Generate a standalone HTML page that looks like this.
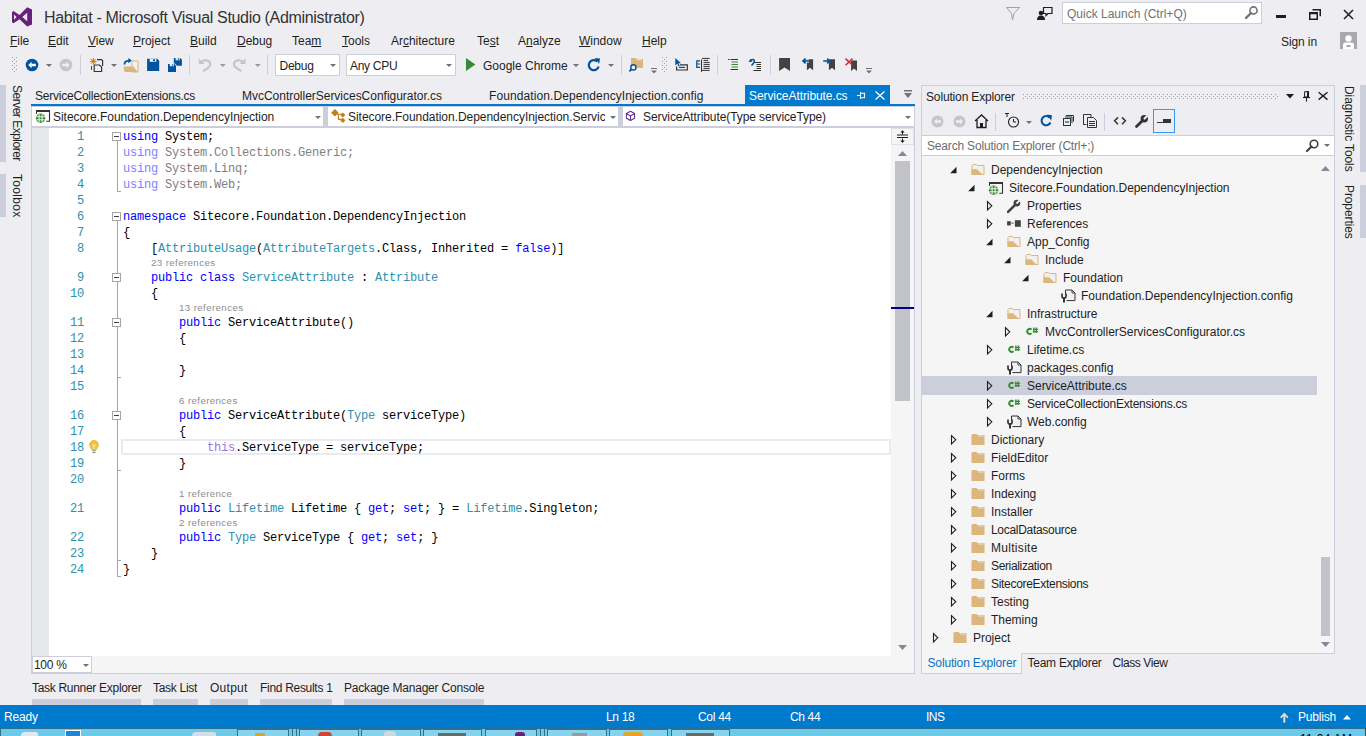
<!DOCTYPE html>
<html><head><meta charset="utf-8">
<style>
*{margin:0;padding:0;box-sizing:border-box}
html,body{width:1366px;height:736px;overflow:hidden;background:#EEEEF2;font-family:"Liberation Sans",sans-serif;font-size:12px;color:#1E1E1E}
body{position:relative}
.a{position:absolute;white-space:nowrap}
svg.a{overflow:visible}
</style></head><body>
<svg class="a" style="left:8px;top:4px" width="30" height="26" viewBox="8 4 30 26"><path d="M27.2 7.2 L32 9.4 V24.5 L27.2 26.6 L19.5 19.2 L13.5 23.2 L12 22.2 V12 L13.5 11 L19.5 15 Z M22.3 17.1 L27.2 21.3 V12.8 Z M14 14.4 V19.8 L16.6 17.1 Z" fill="#68217A" fill-rule="evenodd"/></svg>
<div class="a" style="left:44px;top:8.52px;font-size:16px;line-height:17.87px;color:#333;letter-spacing:-0.33px;">Habitat - Microsoft Visual Studio (Administrator)</div>
<svg class="a" style="left:1006px;top:7px;" width="14" height="14" viewBox="0 0 14 14"><path d="M0.5 0.5 H13.5 L8 6.5 L6.5 13 L5.5 6.5 Z" fill="none" stroke="#A0A0A8" stroke-width="1"/></svg>
<svg class="a" style="left:1037px;top:6px;" width="16" height="15" viewBox="0 0 16 15"><circle cx="4" cy="7" r="2.3" fill="#1E1E1E"/><path d="M0 14 Q0 9.5 4 9.5 Q8 9.5 8 14 Z" fill="#1E1E1E"/><path d="M6.5 1.5 H15 V7.5 H11 L9 9.5 V7.5 H6.5 Z" fill="none" stroke="#1E1E1E" stroke-width="1.2"/></svg>
<div class="a" style="left:1062px;top:2px;width:200px;height:22px;background:#fff;border:1px solid #CCCEDB;"></div>
<div class="a" style="left:1067px;top:8.14px;font-size:12px;line-height:13.40px;color:#717171;letter-spacing:0px;">Quick Launch (Ctrl+Q)</div>
<svg class="a" style="left:1245px;top:6px;" width="14" height="13" viewBox="0 0 14 13"><circle cx="8.5" cy="4.5" r="3.6" fill="none" stroke="#717171" stroke-width="1.6"/><path d="M6 7 L1 12" stroke="#717171" stroke-width="2.4" stroke-linecap="round"/></svg>
<div class="a" style="left:1276px;top:15px;width:10px;height:3px;background:#1E1E1E;"></div>
<svg class="a" style="left:1309px;top:9px;" width="12" height="11" viewBox="0 0 12 11"><path d="M3.5 0.75 H11.25 V7.25 M0.75 3.75 H8.25 V10.25 H0.75 Z M0.75 4.5 H8.25" fill="none" stroke="#1E1E1E" stroke-width="1.5"/></svg>
<svg class="a" style="left:1343px;top:9px;" width="11" height="11" viewBox="0 0 11 11"><path d="M1 1 L10 10 M10 1 L1 10" stroke="#1E1E1E" stroke-width="1.5"/></svg>
<div class="a" style="left:1281px;top:36.14px;font-size:12px;line-height:13.40px;letter-spacing:-0.1px;">Sign in</div>
<svg class="a" style="left:1340px;top:32px;" width="17" height="17" viewBox="0 0 17 17"><rect width="17" height="17" fill="#A9A9AC"/><circle cx="8.5" cy="6.5" r="3.2" fill="#fff"/><path d="M3 17 V12.5 Q3 10.5 5.5 10.5 H11.5 Q14 10.5 14 12.5 V17 Z" fill="#fff"/><rect x="6.5" y="13" width="4" height="2" fill="#A9A9AC"/></svg>
<div class="a" style="left:10px;top:35.14px;font-size:12px;line-height:13.40px;letter-spacing:-0.02px;"><span style="text-decoration:underline;text-underline-offset:1px">F</span>ile</div>
<div class="a" style="left:48px;top:35.14px;font-size:12px;line-height:13.40px;letter-spacing:-0.02px;"><span style="text-decoration:underline;text-underline-offset:1px">E</span>dit</div>
<div class="a" style="left:88px;top:35.14px;font-size:12px;line-height:13.40px;letter-spacing:-0.02px;"><span style="text-decoration:underline;text-underline-offset:1px">V</span>iew</div>
<div class="a" style="left:133px;top:35.14px;font-size:12px;line-height:13.40px;letter-spacing:-0.02px;"><span style="text-decoration:underline;text-underline-offset:1px">P</span>roject</div>
<div class="a" style="left:190px;top:35.14px;font-size:12px;line-height:13.40px;letter-spacing:-0.02px;"><span style="text-decoration:underline;text-underline-offset:1px">B</span>uild</div>
<div class="a" style="left:237px;top:35.14px;font-size:12px;line-height:13.40px;letter-spacing:-0.02px;"><span style="text-decoration:underline;text-underline-offset:1px">D</span>ebug</div>
<div class="a" style="left:292px;top:35.14px;font-size:12px;line-height:13.40px;letter-spacing:-0.02px;">Tea<span style="text-decoration:underline;text-underline-offset:1px">m</span></div>
<div class="a" style="left:342px;top:35.14px;font-size:12px;line-height:13.40px;letter-spacing:-0.02px;"><span style="text-decoration:underline;text-underline-offset:1px">T</span>ools</div>
<div class="a" style="left:391px;top:35.14px;font-size:12px;line-height:13.40px;letter-spacing:-0.02px;">Ar<span style="text-decoration:underline;text-underline-offset:1px">c</span>hitecture</div>
<div class="a" style="left:477px;top:35.14px;font-size:12px;line-height:13.40px;letter-spacing:-0.02px;">Te<span style="text-decoration:underline;text-underline-offset:1px">s</span>t</div>
<div class="a" style="left:518px;top:35.14px;font-size:12px;line-height:13.40px;letter-spacing:-0.02px;">A<span style="text-decoration:underline;text-underline-offset:1px">n</span>alyze</div>
<div class="a" style="left:579px;top:35.14px;font-size:12px;line-height:13.40px;letter-spacing:-0.02px;"><span style="text-decoration:underline;text-underline-offset:1px">W</span>indow</div>
<div class="a" style="left:642px;top:35.14px;font-size:12px;line-height:13.40px;letter-spacing:-0.02px;"><span style="text-decoration:underline;text-underline-offset:1px">H</span>elp</div>
<svg class="a" style="left:12px;top:57px" width="5" height="16" viewBox="12 57 5 16"><rect x="12" y="57" width="1" height="1" fill="#A0A0A8"/><rect x="16" y="57" width="1" height="1" fill="#A0A0A8"/><rect x="12" y="61" width="1" height="1" fill="#A0A0A8"/><rect x="16" y="61" width="1" height="1" fill="#A0A0A8"/><rect x="12" y="65" width="1" height="1" fill="#A0A0A8"/><rect x="16" y="65" width="1" height="1" fill="#A0A0A8"/><rect x="12" y="69" width="1" height="1" fill="#A0A0A8"/><rect x="16" y="69" width="1" height="1" fill="#A0A0A8"/><rect x="14" y="59" width="1" height="1" fill="#A0A0A8"/><rect x="14" y="63" width="1" height="1" fill="#A0A0A8"/><rect x="14" y="67" width="1" height="1" fill="#A0A0A8"/><rect x="14" y="71" width="1" height="1" fill="#A0A0A8"/></svg>
<svg class="a" style="left:25px;top:58px" width="14" height="14" viewBox="25 58 14 14"><circle cx="32" cy="65" r="6.3" fill="#00539C"/><path d="M28.3 65 L31.6 61.7 V63.8 H35.8 V66.2 H31.6 V68.3 Z" fill="#fff"/></svg>
<svg class="a" style="left:46px;top:64px;" width="6" height="3" viewBox="0 0 6 3"><path d="M0 0 H6 L3 3 Z" fill="#717171"/></svg>
<svg class="a" style="left:59px;top:58px" width="14" height="14" viewBox="59 58 14 14"><circle cx="66" cy="65" r="6.3" fill="#C6C6C6"/><path d="M69.7 65 L66.4 61.7 V63.8 H62.2 V66.2 H66.4 V68.3 Z" fill="#EEEEF2"/></svg>
<div class="a" style="left:80px;top:55px;width:1px;height:20px;background:#CCCEDB;"></div>
<svg class="a" style="left:88px;top:57px" width="17" height="17" viewBox="88 57 17 17"><g stroke="#C27D1A" stroke-width="1"><path d="M93.3 58 V64.6 M90 61.3 H96.6 M91 59 L95.6 63.6 M95.6 59 L91 63.6"/></g><circle cx="93.3" cy="61.3" r="1.3" fill="#C27D1A"/><path d="M97 59.6 H101.5 L102.6 60.7 V66" fill="none" stroke="#333" stroke-width="1.2"/><path d="M94.2 65 H99.5 L101.6 67.1 V71.5 H94.2 Z" fill="#F0EFF1" stroke="#333" stroke-width="1.2"/><path d="M91.5 66.2 V69.8" stroke="#333" stroke-width="1"/></svg>
<svg class="a" style="left:111px;top:64px;" width="6" height="3" viewBox="0 0 6 3"><path d="M0 0 H6 L3 3 Z" fill="#717171"/></svg>
<svg class="a" style="left:122px;top:57px" width="17" height="16" viewBox="122 57 17 16"><path d="M132 61 H138 V72 H132 Z" fill="#F0EFF1" stroke="#DCB67A" stroke-width="1"/><path d="M123.5 66.5 H133.5 L137.5 72 H124.5 Z" fill="#DCB67A"/><path d="M124.5 64.5 Q124.2 61 129 60.6" fill="none" stroke="#00539C" stroke-width="1.8"/><path d="M128.4 58 L131.8 60.6 L128.4 63.2 Z" fill="#00539C"/></svg>
<svg class="a" style="left:146px;top:58px" width="14" height="14" viewBox="146 58 14 14"><path d="M147.1 58.8 H157.2 L159.2 60.8 V71 H147.1 Z" fill="#00539C"/><rect x="149.7" y="58.8" width="6.6" height="3" fill="#EEEEF2"/><rect x="153" y="59.3" width="2" height="1.8" fill="#00539C"/></svg>
<svg class="a" style="left:167px;top:57px" width="16" height="16" viewBox="167 57 16 16"><path d="M173.8 58 H180.4 L181.9 59.5 V65.7 H173.8 Z" fill="#00539C"/><rect x="175.6" y="58" width="4.2" height="2.3" fill="#EEEEF2"/><rect x="177.8" y="58.4" width="1.2" height="1.4" fill="#00539C"/><path d="M167.5 63.4 H175 L176.5 64.9 V72.4 H167.5 Z" fill="#EEEEF2"/><path d="M168 63.9 H174.5 L176 65.4 V71.9 H168 Z" fill="#00539C"/><rect x="169.8" y="63.9" width="4.2" height="2.3" fill="#EEEEF2"/><rect x="172" y="64.3" width="1.2" height="1.4" fill="#00539C"/></svg>
<div class="a" style="left:189px;top:55px;width:1px;height:20px;background:#CCCEDB;"></div>
<svg class="a" style="left:197px;top:57px" width="15" height="16" viewBox="197 57 15 16"><path d="M201.5 62.5 Q203.5 59.8 206.5 60.3 Q210.8 61.2 210.2 65 Q209.6 67.5 203 71" fill="none" stroke="#C6C6C6" stroke-width="2.2"/><path d="M198.8 58.1 V64 H204.6 Z" fill="#C6C6C6"/></svg>
<svg class="a" style="left:219px;top:63px" width="8" height="5" viewBox="219 63 8 5"><path d="M219.9 64 H225.7 L222.8 66.9 Z" fill="#999"/></svg>
<svg class="a" style="left:232px;top:57px" width="15" height="16" viewBox="232 57 15 16"><path d="M242.8 62.5 Q240.8 59.8 237.8 60.3 Q233.5 61.2 234.1 65 Q234.7 67.5 241.3 71" fill="none" stroke="#C6C6C6" stroke-width="2.2"/><path d="M245.5 58.1 V64 H239.7 Z" fill="#C6C6C6"/></svg>
<svg class="a" style="left:254px;top:63px" width="8" height="5" viewBox="254 63 8 5"><path d="M254.9 64 H260.7 L257.8 66.9 Z" fill="#999"/></svg>
<div class="a" style="left:267px;top:55px;width:1px;height:20px;background:#CCCEDB;"></div>
<div class="a" style="left:275px;top:54px;width:65px;height:22px;background:#fff;border:1px solid #CCCEDB;"></div>
<div class="a" style="left:279.5px;top:60.14px;font-size:12px;line-height:13.40px;letter-spacing:-0.25px;">Debug</div>
<svg class="a" style="left:330px;top:64px;" width="6" height="3" viewBox="0 0 6 3"><path d="M0 0 H6 L3 3 Z" fill="#717171"/></svg>
<div class="a" style="left:346px;top:54px;width:110px;height:22px;background:#fff;border:1px solid #CCCEDB;"></div>
<div class="a" style="left:350px;top:60.14px;font-size:12px;line-height:13.40px;letter-spacing:-0.3px;">Any CPU</div>
<svg class="a" style="left:446px;top:64px;" width="6" height="3" viewBox="0 0 6 3"><path d="M0 0 H6 L3 3 Z" fill="#717171"/></svg>
<svg class="a" style="left:465px;top:57px" width="11" height="14" viewBox="465 57 11 14"><path d="M466 58 L475.4 64.5 L466 71 Z" fill="#388A34"/></svg>
<div class="a" style="left:483px;top:60.14px;font-size:12px;line-height:13.40px;letter-spacing:0px;">Google Chrome</div>
<svg class="a" style="left:573px;top:64px;" width="6" height="3" viewBox="0 0 6 3"><path d="M0 0 H6 L3 3 Z" fill="#717171"/></svg>
<svg class="a" style="left:585px;top:57px" width="17" height="16" viewBox="585 57 17 16"><path d="M597.2 61.5 A5 5 0 1 0 598.6 66.5" fill="none" stroke="#00539C" stroke-width="2.3"/><path d="M594.6 58 L600 58.4 L599.2 63.8 Z" fill="#00539C"/></svg>
<svg class="a" style="left:608px;top:64px;" width="6" height="3" viewBox="0 0 6 3"><path d="M0 0 H6 L3 3 Z" fill="#717171"/></svg>
<div class="a" style="left:621px;top:55px;width:1px;height:20px;background:#CCCEDB;"></div>
<svg class="a" style="left:628px;top:57px" width="16" height="16" viewBox="628 57 16 16"><path d="M631 58 H636 L637 59 H643 V68 H631 Z" fill="#DCB67A"/><path d="M636.5 59.7 H642" stroke="#F0EFF1" stroke-width="0.8"/><circle cx="633.4" cy="67.4" r="2.6" fill="#EEEEF2" stroke="#00539C" stroke-width="1.4"/><path d="M631.6 69.2 L629.4 71.4" stroke="#00539C" stroke-width="1.8"/></svg>
<svg class="a" style="left:651px;top:68px" width="7" height="7" viewBox="651 68 7 7"><rect x="651" y="68" width="6" height="1" fill="#717171"/><path d="M651 70.5 H657 L654 73.5 Z" fill="#717171"/></svg>
<svg class="a" style="left:662px;top:57px" width="5" height="16" viewBox="662 57 5 16"><rect x="662" y="57" width="1" height="1" fill="#A0A0A8"/><rect x="666" y="57" width="1" height="1" fill="#A0A0A8"/><rect x="662" y="61" width="1" height="1" fill="#A0A0A8"/><rect x="666" y="61" width="1" height="1" fill="#A0A0A8"/><rect x="662" y="65" width="1" height="1" fill="#A0A0A8"/><rect x="666" y="65" width="1" height="1" fill="#A0A0A8"/><rect x="662" y="69" width="1" height="1" fill="#A0A0A8"/><rect x="666" y="69" width="1" height="1" fill="#A0A0A8"/><rect x="664" y="59" width="1" height="1" fill="#A0A0A8"/><rect x="664" y="63" width="1" height="1" fill="#A0A0A8"/><rect x="664" y="67" width="1" height="1" fill="#A0A0A8"/><rect x="664" y="71" width="1" height="1" fill="#A0A0A8"/></svg>
<svg class="a" style="left:674px;top:57px" width="15" height="15" viewBox="674 57 15 15"><path d="M675.3 58 V65.5 L677.2 63.8 L678.6 66.6 L679.8 66 L678.4 63.3 H681 Z" fill="#00539C"/><path d="M680 64.8 H687.3 V70 H676.6 V66.5" fill="none" stroke="#333" stroke-width="1.2"/><path d="M679 67.4 H685" stroke="#333" stroke-width="1.1"/></svg>
<svg class="a" style="left:695px;top:57px" width="16" height="16" viewBox="695 57 16 16"><path d="M700 60.8 H696.8 V67.3 H700" fill="none" stroke="#00539C" stroke-width="1.3"/><path d="M697 64 H700" stroke="#00539C" stroke-width="1"/><path d="M701.5 59.5 V71.8" stroke="#333" stroke-width="1.1"/><path d="M702 58.4 H709.7 M703.5 60.4 H708 M703.5 62.4 H709.7 M703.5 64.4 H709.7 M703.5 66.4 H709.7 M703.5 68.4 H709.7 M702 70.4 H709.7" stroke="#333" stroke-width="1"/></svg>
<div class="a" style="left:717px;top:55px;width:1px;height:20px;background:#CCCEDB;"></div>
<svg class="a" style="left:726px;top:57px" width="14" height="15" viewBox="726 57 14 15"><path d="M728 59.5 H729.5 M730.5 59.5 H738 M730.5 69.5 H738" stroke="#333" stroke-width="1"/><path d="M731.5 62 H738 M731.5 64.5 H738 M731.5 67 H738" stroke="#388A34" stroke-width="1.2"/></svg>
<svg class="a" style="left:747px;top:57px" width="15" height="15" viewBox="747 57 15 15"><path d="M755 62.5 H761 M756.5 64.5 H761 M756.5 66.5 H761 M756.5 68.5 H761 M753.4 70.5 H761" stroke="#333" stroke-width="1"/><path d="M750.5 61 Q751 59.3 753 59.5 Q755 60 754 62.5 Q753 64 751.5 65.5" fill="none" stroke="#00539C" stroke-width="1.6"/><path d="M748.5 62 L750.5 58.8 L752.3 61.8 Z" fill="#00539C"/></svg>
<div class="a" style="left:770px;top:55px;width:1px;height:20px;background:#CCCEDB;"></div>
<svg class="a" style="left:778px;top:57px" width="13" height="15" viewBox="778 57 13 15"><path d="M779.1 58.1 H790 V71 L784.55 67.5 L779.1 71 Z" fill="#424242"/></svg>
<svg class="a" style="left:801px;top:57px" width="14" height="15" viewBox="801 57 14 15"><path d="M806.9 59.3 H813.1 V70.2 L810 67.8 L806.9 70.2 Z" fill="#424242"/><path d="M809 61 H803.5" stroke="#EEEEF2" stroke-width="3.2"/><path d="M809 61 H803.5 M805.6 58.7 L803 61 L805.6 63.3" fill="none" stroke="#00539C" stroke-width="1.7"/></svg>
<svg class="a" style="left:822px;top:57px" width="14" height="15" viewBox="822 57 14 15"><path d="M828.9 59.3 H835 V70.2 L832 67.8 L828.9 70.2 Z" fill="#424242"/><path d="M823.2 61 H829.5" stroke="#EEEEF2" stroke-width="3.2"/><path d="M823.2 61 H829.5 M827.2 58.7 L829.8 61 L827.2 63.3" fill="none" stroke="#00539C" stroke-width="1.7"/></svg>
<svg class="a" style="left:844px;top:57px" width="14" height="15" viewBox="844 57 14 15"><path d="M851.1 60.4 H857 V71 L854 68.6 L851.1 71 Z" fill="#424242"/><path d="M845.5 58.6 L852.5 65.2 M852.5 58.6 L845.5 65.2" stroke="#D02E2E" stroke-width="1.5"/></svg>
<svg class="a" style="left:866px;top:68px" width="7" height="7" viewBox="866 68 7 7"><rect x="866" y="68" width="6" height="1" fill="#717171"/><path d="M866 70.5 H872 L869 73.5 Z" fill="#717171"/></svg>
<div class="a" style="left:0px;top:85px;width:6px;height:77px;background:#CCCEDB;"></div>
<div class="a" style="left:0px;top:174px;width:6px;height:43px;background:#CCCEDB;"></div>
<div class="a" style="left:10px;top:85px;width:14px;height:77px;writing-mode:vertical-rl;font-size:12px;line-height:14px;letter-spacing:-0.5px">Server Explorer</div>
<div class="a" style="left:10px;top:174px;width:14px;height:45px;writing-mode:vertical-rl;font-size:12px;line-height:14px;letter-spacing:0.3px">Toolbox</div>
<div class="a" style="left:1360px;top:85px;width:6px;height:87px;background:#CCCEDB;"></div>
<div class="a" style="left:1360px;top:185px;width:6px;height:53px;background:#CCCEDB;"></div>
<div class="a" style="left:1342px;top:86px;width:14px;height:87px;writing-mode:vertical-rl;font-size:12px;line-height:14px;letter-spacing:-0.1px">Diagnostic Tools</div>
<div class="a" style="left:1342px;top:185px;width:14px;height:53px;writing-mode:vertical-rl;font-size:12px;line-height:14px;letter-spacing:-0.1px">Properties</div>
<div class="a" style="left:35px;top:90.14px;font-size:12px;line-height:13.40px;letter-spacing:-0.22px;">ServiceCollectionExtensions.cs</div>
<div class="a" style="left:242px;top:90.14px;font-size:12px;line-height:13.40px;letter-spacing:-0.02px;">MvcControllerServicesConfigurator.cs</div>
<div class="a" style="left:489px;top:90.14px;font-size:12px;line-height:13.40px;letter-spacing:0.1px;">Foundation.DependencyInjection.config</div>
<div class="a" style="left:745px;top:85px;width:145px;height:19px;background:#007ACC;"></div>
<div class="a" style="left:749px;top:90.14px;font-size:12px;line-height:13.40px;color:#fff;letter-spacing:-0.08px;">ServiceAttribute.cs</div>
<svg class="a" style="left:856px;top:91px" width="10" height="9" viewBox="856 91 10 9"><path d="M857 95.5 H860 M860.5 92 V99" stroke="#fff" stroke-width="1.1"/><path d="M860.5 93.3 H864.5 V97.7 H860.5" fill="none" stroke="#fff" stroke-width="1.1"/></svg>
<svg class="a" style="left:875px;top:91px;" width="10" height="9" viewBox="0 0 10 9"><path d="M0.5 0.5 L9.5 8.5 M9.5 0.5 L0.5 8.5" stroke="#fff" stroke-width="1.3"/></svg>
<svg class="a" style="left:904px;top:90px;" width="8" height="8" viewBox="0 0 8 8"><rect x="0" y="0" width="8" height="1.5" fill="#717171"/><path d="M0 3 H8 L4 8 Z" fill="#717171"/></svg>
<div class="a" style="left:31px;top:104px;width:884px;height:2px;background:#007ACC;"></div>
<div class="a" style="left:31px;top:106px;width:884px;height:22px;background:#CCCEDB;"></div>
<div class="a" style="left:32px;top:107px;width:291px;height:19px;background:#fff;"></div>
<div class="a" style="left:328px;top:107px;width:290px;height:19px;background:#fff;"></div>
<div class="a" style="left:623px;top:107px;width:291px;height:19px;background:#fff;"></div>
<svg class="a" style="left:32px;top:107px" width="20" height="19" viewBox="32 107 20 19"><path d="M36 111 H50" stroke="#333" stroke-width="2"/><path d="M49.5 112 V121.3 H46.3" fill="none" stroke="#333" stroke-width="1.1"/><path d="M36.5 112 V114" stroke="#333" stroke-width="1"/><circle cx="40.6" cy="118.3" r="4.7" fill="#388A34"/><path d="M36.4 116.8 H44.8 M36.4 119.8 H44.8 M39.1 114 V122.6 M42.1 114 V122.6" stroke="#fff" stroke-width="0.9"/></svg>
<div class="a" style="left:53px;top:111.14px;font-size:12px;line-height:13.40px;letter-spacing:-0.04px;">Sitecore.Foundation.DependencyInjection</div>
<svg class="a" style="left:315px;top:116px;" width="6" height="3" viewBox="0 0 6 3"><path d="M0 0 H6 L3 3 Z" fill="#717171"/></svg>
<svg class="a" style="left:328px;top:107px" width="20" height="19" viewBox="328 107 20 19"><path d="M334.9 109 L338.7 112.8 L334.9 116.6 L331.1 112.8 Z" fill="#C27D1A"/><path d="M342.8 112.4 L345.4 115 L342.8 117.6 L340.2 115 Z M342.8 117.7 L345.4 120.3 L342.8 122.9 L340.2 120.3 Z" fill="#C27D1A"/><path d="M337 114.3 H342 M338.4 114.3 V119.4 H342" fill="none" stroke="#C27D1A" stroke-width="1.1"/></svg>
<div class="a" style="left:348px;top:111.14px;font-size:12px;line-height:13.40px;letter-spacing:-0.04px;width:257px;overflow:hidden;">Sitecore.Foundation.DependencyInjection.Servic</div>
<svg class="a" style="left:610px;top:116px;" width="6" height="3" viewBox="0 0 6 3"><path d="M0 0 H6 L3 3 Z" fill="#717171"/></svg>
<svg class="a" style="left:624px;top:109px" width="14" height="14" viewBox="624 109 14 14"><path d="M630.5 111.3 L634.6 113.6 V118.2 L630.5 120.5 L626.4 118.2 V113.6 Z M626.4 113.6 L630.5 116 L634.6 113.6 M630.5 116 V120.5" fill="none" stroke="#652D90" stroke-width="1.1" stroke-linejoin="round"/></svg>
<div class="a" style="left:643px;top:111.14px;font-size:12px;line-height:13.40px;letter-spacing:-0.09px;">ServiceAttribute(Type serviceType)</div>
<svg class="a" style="left:905px;top:116px;" width="6" height="3" viewBox="0 0 6 3"><path d="M0 0 H6 L3 3 Z" fill="#717171"/></svg>
<div class="a" style="left:31px;top:128px;width:1px;height:545px;background:#CCCEDB;"></div>
<div class="a" style="left:32px;top:128px;width:859px;height:528px;background:#fff;"></div>
<div class="a" style="left:32px;top:128px;width:17px;height:528px;background:#E6E7E8;"></div>
<div class="a" style="left:891px;top:128px;width:23px;height:528px;background:#F5F5F5;"></div>
<div class="a" style="left:914px;top:106px;width:1px;height:567px;background:#CCCEDB;"></div>
<div class="a" style="left:891px;top:128px;width:23px;height:17px;background:#F5F5F5;border:1px solid #E0E0E6;"></div>
<svg class="a" style="left:892px;top:129px" width="22" height="16" viewBox="892 129 22 16"><path d="M902.5 131.5 V134.5 M902.5 138.5 V141.5" stroke="#1E1E1E" stroke-width="1"/><path d="M897 135 H908 M897 137.5 H908" stroke="#1E1E1E" stroke-width="1.2"/><path d="M900.3 132.6 L902.5 130.3 L904.7 132.6 Z M900.3 140.6 L902.5 142.9 L904.7 140.6 Z" fill="#1E1E1E"/></svg>
<svg class="a" style="left:898px;top:151px;" width="9" height="5" viewBox="0 0 9 5"><path d="M4.5 0 L9 5 H0 Z" fill="#868999"/></svg>
<div class="a" style="left:895px;top:161px;width:15px;height:240px;background:#C2C3C9;"></div>
<div class="a" style="left:891px;top:307px;width:23px;height:2px;background:#00008B;"></div>
<svg class="a" style="left:898px;top:645px;" width="9" height="5" viewBox="0 0 9 5"><path d="M0 0 H9 L4.5 5 Z" fill="#868999"/></svg>
<div class="a" style="left:32px;top:656px;width:882px;height:17px;background:#F5F5F5;"></div>
<div class="a" style="left:31px;top:673px;width:884px;height:1px;background:#CCCEDB;"></div>
<div class="a" style="left:32px;top:656px;width:60px;height:17px;background:#fff;border:1px solid #CCCEDB;"></div>
<div class="a" style="left:34px;top:659.14px;font-size:12px;line-height:13.40px;letter-spacing:-0.3px;">100 %</div>
<svg class="a" style="left:83px;top:664px;" width="6" height="3" viewBox="0 0 6 3"><path d="M0 0 H6 L3 3 Z" fill="#717171"/></svg>
<div class="a" style="left:151px;top:257.72px;font-size:9.7px;line-height:10.83px;color:#8E8E8E;letter-spacing:0.4px;">23 references</div>
<div class="a" style="left:179px;top:302.72px;font-size:9.7px;line-height:10.83px;color:#8E8E8E;letter-spacing:0.4px;">13 references</div>
<div class="a" style="left:179px;top:395.72px;font-size:9.7px;line-height:10.83px;color:#8E8E8E;letter-spacing:0.4px;">6 references</div>
<div class="a" style="left:179px;top:488.72px;font-size:9.7px;line-height:10.83px;color:#8E8E8E;letter-spacing:0.4px;">1 reference</div>
<div class="a" style="left:179px;top:517.72px;font-size:9.7px;line-height:10.83px;color:#8E8E8E;letter-spacing:0.4px;">2 references</div>
<div class="a" style="left:121px;top:439px;width:770px;height:16px;border:2px solid #EAEAF2;"></div>
<div class="a" style="left:77px;top:131.00px;font-size:12px;line-height:13.60px;color:#2B91AF;letter-spacing:-0.2px;font-family:'Liberation Mono',monospace;white-space:pre;">1</div>
<div class="a" style="left:123px;top:131.00px;font-size:12px;line-height:13.60px;letter-spacing:-0.2px;font-family:'Liberation Mono',monospace;white-space:pre;"><span style="color:#0000FF">using </span><span style="color:#000000">System;</span></div>
<div class="a" style="left:77px;top:147.00px;font-size:12px;line-height:13.60px;color:#2B91AF;letter-spacing:-0.2px;font-family:'Liberation Mono',monospace;white-space:pre;">2</div>
<div class="a" style="left:123px;top:147.00px;font-size:12px;line-height:13.60px;letter-spacing:-0.2px;font-family:'Liberation Mono',monospace;white-space:pre;"><span style="color:#8080FF">using </span><span style="color:#808080">System.Collections.Generic;</span></div>
<div class="a" style="left:77px;top:163.00px;font-size:12px;line-height:13.60px;color:#2B91AF;letter-spacing:-0.2px;font-family:'Liberation Mono',monospace;white-space:pre;">3</div>
<div class="a" style="left:123px;top:163.00px;font-size:12px;line-height:13.60px;letter-spacing:-0.2px;font-family:'Liberation Mono',monospace;white-space:pre;"><span style="color:#8080FF">using </span><span style="color:#808080">System.Linq;</span></div>
<div class="a" style="left:77px;top:179.00px;font-size:12px;line-height:13.60px;color:#2B91AF;letter-spacing:-0.2px;font-family:'Liberation Mono',monospace;white-space:pre;">4</div>
<div class="a" style="left:123px;top:179.00px;font-size:12px;line-height:13.60px;letter-spacing:-0.2px;font-family:'Liberation Mono',monospace;white-space:pre;"><span style="color:#8080FF">using </span><span style="color:#808080">System.Web;</span></div>
<div class="a" style="left:77px;top:195.00px;font-size:12px;line-height:13.60px;color:#2B91AF;letter-spacing:-0.2px;font-family:'Liberation Mono',monospace;white-space:pre;">5</div>
<div class="a" style="left:77px;top:211.00px;font-size:12px;line-height:13.60px;color:#2B91AF;letter-spacing:-0.2px;font-family:'Liberation Mono',monospace;white-space:pre;">6</div>
<div class="a" style="left:123px;top:211.00px;font-size:12px;line-height:13.60px;letter-spacing:-0.2px;font-family:'Liberation Mono',monospace;white-space:pre;"><span style="color:#0000FF">namespace </span><span style="color:#000000">Sitecore.Foundation.DependencyInjection</span></div>
<div class="a" style="left:77px;top:227.00px;font-size:12px;line-height:13.60px;color:#2B91AF;letter-spacing:-0.2px;font-family:'Liberation Mono',monospace;white-space:pre;">7</div>
<div class="a" style="left:123px;top:227.00px;font-size:12px;line-height:13.60px;letter-spacing:-0.2px;font-family:'Liberation Mono',monospace;white-space:pre;"><span style="color:#000000">{</span></div>
<div class="a" style="left:77px;top:243.00px;font-size:12px;line-height:13.60px;color:#2B91AF;letter-spacing:-0.2px;font-family:'Liberation Mono',monospace;white-space:pre;">8</div>
<div class="a" style="left:123px;top:243.00px;font-size:12px;line-height:13.60px;letter-spacing:-0.2px;font-family:'Liberation Mono',monospace;white-space:pre;"><span style="color:#000000">    [</span><span style="color:#2B91AF">AttributeUsage</span><span style="color:#000000">(</span><span style="color:#2B91AF">AttributeTargets</span><span style="color:#000000">.Class, Inherited = </span><span style="color:#0000FF">false</span><span style="color:#000000">)]</span></div>
<div class="a" style="left:77px;top:272.00px;font-size:12px;line-height:13.60px;color:#2B91AF;letter-spacing:-0.2px;font-family:'Liberation Mono',monospace;white-space:pre;">9</div>
<div class="a" style="left:123px;top:272.00px;font-size:12px;line-height:13.60px;letter-spacing:-0.2px;font-family:'Liberation Mono',monospace;white-space:pre;"><span style="color:#000000">    </span><span style="color:#0000FF">public </span><span style="color:#0000FF">class </span><span style="color:#2B91AF">ServiceAttribute</span><span style="color:#000000"> : </span><span style="color:#2B91AF">Attribute</span></div>
<div class="a" style="left:70px;top:288.00px;font-size:12px;line-height:13.60px;color:#2B91AF;letter-spacing:-0.2px;font-family:'Liberation Mono',monospace;white-space:pre;">10</div>
<div class="a" style="left:123px;top:288.00px;font-size:12px;line-height:13.60px;letter-spacing:-0.2px;font-family:'Liberation Mono',monospace;white-space:pre;"><span style="color:#000000">    {</span></div>
<div class="a" style="left:70px;top:317.00px;font-size:12px;line-height:13.60px;color:#2B91AF;letter-spacing:-0.2px;font-family:'Liberation Mono',monospace;white-space:pre;">11</div>
<div class="a" style="left:123px;top:317.00px;font-size:12px;line-height:13.60px;letter-spacing:-0.2px;font-family:'Liberation Mono',monospace;white-space:pre;"><span style="color:#000000">        </span><span style="color:#0000FF">public </span><span style="color:#000000">ServiceAttribute()</span></div>
<div class="a" style="left:70px;top:333.00px;font-size:12px;line-height:13.60px;color:#2B91AF;letter-spacing:-0.2px;font-family:'Liberation Mono',monospace;white-space:pre;">12</div>
<div class="a" style="left:123px;top:333.00px;font-size:12px;line-height:13.60px;letter-spacing:-0.2px;font-family:'Liberation Mono',monospace;white-space:pre;"><span style="color:#000000">        {</span></div>
<div class="a" style="left:70px;top:349.00px;font-size:12px;line-height:13.60px;color:#2B91AF;letter-spacing:-0.2px;font-family:'Liberation Mono',monospace;white-space:pre;">13</div>
<div class="a" style="left:70px;top:365.00px;font-size:12px;line-height:13.60px;color:#2B91AF;letter-spacing:-0.2px;font-family:'Liberation Mono',monospace;white-space:pre;">14</div>
<div class="a" style="left:123px;top:365.00px;font-size:12px;line-height:13.60px;letter-spacing:-0.2px;font-family:'Liberation Mono',monospace;white-space:pre;"><span style="color:#000000">        }</span></div>
<div class="a" style="left:70px;top:381.00px;font-size:12px;line-height:13.60px;color:#2B91AF;letter-spacing:-0.2px;font-family:'Liberation Mono',monospace;white-space:pre;">15</div>
<div class="a" style="left:70px;top:410.00px;font-size:12px;line-height:13.60px;color:#2B91AF;letter-spacing:-0.2px;font-family:'Liberation Mono',monospace;white-space:pre;">16</div>
<div class="a" style="left:123px;top:410.00px;font-size:12px;line-height:13.60px;letter-spacing:-0.2px;font-family:'Liberation Mono',monospace;white-space:pre;"><span style="color:#000000">        </span><span style="color:#0000FF">public </span><span style="color:#000000">ServiceAttribute(</span><span style="color:#2B91AF">Type</span><span style="color:#000000"> serviceType)</span></div>
<div class="a" style="left:70px;top:426.00px;font-size:12px;line-height:13.60px;color:#2B91AF;letter-spacing:-0.2px;font-family:'Liberation Mono',monospace;white-space:pre;">17</div>
<div class="a" style="left:123px;top:426.00px;font-size:12px;line-height:13.60px;letter-spacing:-0.2px;font-family:'Liberation Mono',monospace;white-space:pre;"><span style="color:#000000">        {</span></div>
<div class="a" style="left:70px;top:442.00px;font-size:12px;line-height:13.60px;color:#2B91AF;letter-spacing:-0.2px;font-family:'Liberation Mono',monospace;white-space:pre;">18</div>
<div class="a" style="left:123px;top:442.00px;font-size:12px;line-height:13.60px;letter-spacing:-0.2px;font-family:'Liberation Mono',monospace;white-space:pre;"><span style="color:#000000">            </span><span style="color:#9A77E0">this</span><span style="color:#000000">.ServiceType = serviceType;</span></div>
<div class="a" style="left:70px;top:458.00px;font-size:12px;line-height:13.60px;color:#2B91AF;letter-spacing:-0.2px;font-family:'Liberation Mono',monospace;white-space:pre;">19</div>
<div class="a" style="left:123px;top:458.00px;font-size:12px;line-height:13.60px;letter-spacing:-0.2px;font-family:'Liberation Mono',monospace;white-space:pre;"><span style="color:#000000">        }</span></div>
<div class="a" style="left:70px;top:474.00px;font-size:12px;line-height:13.60px;color:#2B91AF;letter-spacing:-0.2px;font-family:'Liberation Mono',monospace;white-space:pre;">20</div>
<div class="a" style="left:70px;top:503.00px;font-size:12px;line-height:13.60px;color:#2B91AF;letter-spacing:-0.2px;font-family:'Liberation Mono',monospace;white-space:pre;">21</div>
<div class="a" style="left:123px;top:503.00px;font-size:12px;line-height:13.60px;letter-spacing:-0.2px;font-family:'Liberation Mono',monospace;white-space:pre;"><span style="color:#000000">        </span><span style="color:#0000FF">public </span><span style="color:#2B91AF">Lifetime</span><span style="color:#000000"> Lifetime { </span><span style="color:#0000FF">get</span><span style="color:#000000">; </span><span style="color:#0000FF">set</span><span style="color:#000000">; } = </span><span style="color:#2B91AF">Lifetime</span><span style="color:#000000">.Singleton;</span></div>
<div class="a" style="left:70px;top:532.00px;font-size:12px;line-height:13.60px;color:#2B91AF;letter-spacing:-0.2px;font-family:'Liberation Mono',monospace;white-space:pre;">22</div>
<div class="a" style="left:123px;top:532.00px;font-size:12px;line-height:13.60px;letter-spacing:-0.2px;font-family:'Liberation Mono',monospace;white-space:pre;"><span style="color:#000000">        </span><span style="color:#0000FF">public </span><span style="color:#2B91AF">Type</span><span style="color:#000000"> ServiceType { </span><span style="color:#0000FF">get</span><span style="color:#000000">; </span><span style="color:#0000FF">set</span><span style="color:#000000">; }</span></div>
<div class="a" style="left:70px;top:548.00px;font-size:12px;line-height:13.60px;color:#2B91AF;letter-spacing:-0.2px;font-family:'Liberation Mono',monospace;white-space:pre;">23</div>
<div class="a" style="left:123px;top:548.00px;font-size:12px;line-height:13.60px;letter-spacing:-0.2px;font-family:'Liberation Mono',monospace;white-space:pre;"><span style="color:#000000">    }</span></div>
<div class="a" style="left:70px;top:564.00px;font-size:12px;line-height:13.60px;color:#2B91AF;letter-spacing:-0.2px;font-family:'Liberation Mono',monospace;white-space:pre;">24</div>
<div class="a" style="left:123px;top:564.00px;font-size:12px;line-height:13.60px;letter-spacing:-0.2px;font-family:'Liberation Mono',monospace;white-space:pre;"><span style="color:#000000">}</span></div>
<svg class="a" style="left:89px;top:440px;" width="10" height="15" viewBox="0 0 10 15"><path d="M5 0.5 A4.3 4.3 0 0 1 8.3 7.6 L7.3 9.5 H2.7 L1.7 7.6 A4.3 4.3 0 0 1 5 0.5 Z" fill="#F0C43C" stroke="#E0A81E" stroke-width="0.8"/><path d="M3.2 10.8 H6.8 M3.5 12.6 H6.5" stroke="#888" stroke-width="1"/><path d="M3.5 4.5 L5 6.5 L6.5 4.5 M5 6.5 V9" fill="none" stroke="#fff" stroke-width="0.8"/></svg>
<div class="a" style="left:117px;top:141px;width:1px;height:51px;background:#A5A5A5;"></div>
<div class="a" style="left:117px;top:191px;width:4px;height:1px;background:#A5A5A5;"></div>
<div class="a" style="left:117px;top:221px;width:1px;height:356px;background:#A5A5A5;"></div>
<div class="a" style="left:117px;top:377px;width:4px;height:1px;background:#A5A5A5;"></div>
<div class="a" style="left:117px;top:470px;width:4px;height:1px;background:#A5A5A5;"></div>
<div class="a" style="left:117px;top:560px;width:4px;height:1px;background:#A5A5A5;"></div>
<div class="a" style="left:117px;top:576px;width:4px;height:1px;background:#A5A5A5;"></div>
<svg class="a" style="left:112px;top:132px;" width="9" height="9" viewBox="0 0 9 9"><rect x="0.5" y="0.5" width="8" height="8" fill="#fff" stroke="#A5A5A5"/><path d="M2 4.5 H7" stroke="#424242"/></svg>
<svg class="a" style="left:112px;top:212px;" width="9" height="9" viewBox="0 0 9 9"><rect x="0.5" y="0.5" width="8" height="8" fill="#fff" stroke="#A5A5A5"/><path d="M2 4.5 H7" stroke="#424242"/></svg>
<svg class="a" style="left:112px;top:273px;" width="9" height="9" viewBox="0 0 9 9"><rect x="0.5" y="0.5" width="8" height="8" fill="#fff" stroke="#A5A5A5"/><path d="M2 4.5 H7" stroke="#424242"/></svg>
<svg class="a" style="left:112px;top:318px;" width="9" height="9" viewBox="0 0 9 9"><rect x="0.5" y="0.5" width="8" height="8" fill="#fff" stroke="#A5A5A5"/><path d="M2 4.5 H7" stroke="#424242"/></svg>
<svg class="a" style="left:112px;top:411px;" width="9" height="9" viewBox="0 0 9 9"><rect x="0.5" y="0.5" width="8" height="8" fill="#fff" stroke="#A5A5A5"/><path d="M2 4.5 H7" stroke="#424242"/></svg>
<div class="a" style="left:32px;top:681.64px;font-size:12px;line-height:13.40px;letter-spacing:-0.3px;">Task Runner Explorer</div>
<div class="a" style="left:32px;top:699px;width:109px;height:6px;background:#CCCEDB;"></div>
<div class="a" style="left:153px;top:681.64px;font-size:12px;line-height:13.40px;letter-spacing:-0.3px;">Task List</div>
<div class="a" style="left:153px;top:699px;width:45px;height:6px;background:#CCCEDB;"></div>
<div class="a" style="left:210px;top:681.64px;font-size:12px;line-height:13.40px;letter-spacing:0.27px;">Output</div>
<div class="a" style="left:210px;top:699px;width:38px;height:6px;background:#CCCEDB;"></div>
<div class="a" style="left:260px;top:681.64px;font-size:12px;line-height:13.40px;letter-spacing:-0.3px;">Find Results 1</div>
<div class="a" style="left:260px;top:699px;width:72px;height:6px;background:#CCCEDB;"></div>
<div class="a" style="left:344px;top:681.64px;font-size:12px;line-height:13.40px;letter-spacing:-0.2px;">Package Manager Console</div>
<div class="a" style="left:344px;top:699px;width:140px;height:6px;background:#CCCEDB;"></div>
<div class="a" style="left:921px;top:85px;width:414px;height:569px;background:#EEEEF2;border:1px solid #CCCEDB;"></div>
<div class="a" style="left:926px;top:91.14px;font-size:12px;line-height:13.40px;letter-spacing:-0.15px;">Solution Explorer</div>
<svg class="a" style="left:1023px;top:94px;" width="256" height="5" viewBox="0 0 256 5"><rect x="0" y="0" width="1" height="1" fill="#999"/><rect x="4" y="0" width="1" height="1" fill="#999"/><rect x="8" y="0" width="1" height="1" fill="#999"/><rect x="12" y="0" width="1" height="1" fill="#999"/><rect x="16" y="0" width="1" height="1" fill="#999"/><rect x="20" y="0" width="1" height="1" fill="#999"/><rect x="24" y="0" width="1" height="1" fill="#999"/><rect x="28" y="0" width="1" height="1" fill="#999"/><rect x="32" y="0" width="1" height="1" fill="#999"/><rect x="36" y="0" width="1" height="1" fill="#999"/><rect x="40" y="0" width="1" height="1" fill="#999"/><rect x="44" y="0" width="1" height="1" fill="#999"/><rect x="48" y="0" width="1" height="1" fill="#999"/><rect x="52" y="0" width="1" height="1" fill="#999"/><rect x="56" y="0" width="1" height="1" fill="#999"/><rect x="60" y="0" width="1" height="1" fill="#999"/><rect x="64" y="0" width="1" height="1" fill="#999"/><rect x="68" y="0" width="1" height="1" fill="#999"/><rect x="72" y="0" width="1" height="1" fill="#999"/><rect x="76" y="0" width="1" height="1" fill="#999"/><rect x="80" y="0" width="1" height="1" fill="#999"/><rect x="84" y="0" width="1" height="1" fill="#999"/><rect x="88" y="0" width="1" height="1" fill="#999"/><rect x="92" y="0" width="1" height="1" fill="#999"/><rect x="96" y="0" width="1" height="1" fill="#999"/><rect x="100" y="0" width="1" height="1" fill="#999"/><rect x="104" y="0" width="1" height="1" fill="#999"/><rect x="108" y="0" width="1" height="1" fill="#999"/><rect x="112" y="0" width="1" height="1" fill="#999"/><rect x="116" y="0" width="1" height="1" fill="#999"/><rect x="120" y="0" width="1" height="1" fill="#999"/><rect x="124" y="0" width="1" height="1" fill="#999"/><rect x="128" y="0" width="1" height="1" fill="#999"/><rect x="132" y="0" width="1" height="1" fill="#999"/><rect x="136" y="0" width="1" height="1" fill="#999"/><rect x="140" y="0" width="1" height="1" fill="#999"/><rect x="144" y="0" width="1" height="1" fill="#999"/><rect x="148" y="0" width="1" height="1" fill="#999"/><rect x="152" y="0" width="1" height="1" fill="#999"/><rect x="156" y="0" width="1" height="1" fill="#999"/><rect x="160" y="0" width="1" height="1" fill="#999"/><rect x="164" y="0" width="1" height="1" fill="#999"/><rect x="168" y="0" width="1" height="1" fill="#999"/><rect x="172" y="0" width="1" height="1" fill="#999"/><rect x="176" y="0" width="1" height="1" fill="#999"/><rect x="180" y="0" width="1" height="1" fill="#999"/><rect x="184" y="0" width="1" height="1" fill="#999"/><rect x="188" y="0" width="1" height="1" fill="#999"/><rect x="192" y="0" width="1" height="1" fill="#999"/><rect x="196" y="0" width="1" height="1" fill="#999"/><rect x="200" y="0" width="1" height="1" fill="#999"/><rect x="204" y="0" width="1" height="1" fill="#999"/><rect x="208" y="0" width="1" height="1" fill="#999"/><rect x="212" y="0" width="1" height="1" fill="#999"/><rect x="216" y="0" width="1" height="1" fill="#999"/><rect x="220" y="0" width="1" height="1" fill="#999"/><rect x="224" y="0" width="1" height="1" fill="#999"/><rect x="228" y="0" width="1" height="1" fill="#999"/><rect x="232" y="0" width="1" height="1" fill="#999"/><rect x="236" y="0" width="1" height="1" fill="#999"/><rect x="240" y="0" width="1" height="1" fill="#999"/><rect x="244" y="0" width="1" height="1" fill="#999"/><rect x="248" y="0" width="1" height="1" fill="#999"/><rect x="252" y="0" width="1" height="1" fill="#999"/><rect x="2" y="2" width="1" height="1" fill="#999"/><rect x="6" y="2" width="1" height="1" fill="#999"/><rect x="10" y="2" width="1" height="1" fill="#999"/><rect x="14" y="2" width="1" height="1" fill="#999"/><rect x="18" y="2" width="1" height="1" fill="#999"/><rect x="22" y="2" width="1" height="1" fill="#999"/><rect x="26" y="2" width="1" height="1" fill="#999"/><rect x="30" y="2" width="1" height="1" fill="#999"/><rect x="34" y="2" width="1" height="1" fill="#999"/><rect x="38" y="2" width="1" height="1" fill="#999"/><rect x="42" y="2" width="1" height="1" fill="#999"/><rect x="46" y="2" width="1" height="1" fill="#999"/><rect x="50" y="2" width="1" height="1" fill="#999"/><rect x="54" y="2" width="1" height="1" fill="#999"/><rect x="58" y="2" width="1" height="1" fill="#999"/><rect x="62" y="2" width="1" height="1" fill="#999"/><rect x="66" y="2" width="1" height="1" fill="#999"/><rect x="70" y="2" width="1" height="1" fill="#999"/><rect x="74" y="2" width="1" height="1" fill="#999"/><rect x="78" y="2" width="1" height="1" fill="#999"/><rect x="82" y="2" width="1" height="1" fill="#999"/><rect x="86" y="2" width="1" height="1" fill="#999"/><rect x="90" y="2" width="1" height="1" fill="#999"/><rect x="94" y="2" width="1" height="1" fill="#999"/><rect x="98" y="2" width="1" height="1" fill="#999"/><rect x="102" y="2" width="1" height="1" fill="#999"/><rect x="106" y="2" width="1" height="1" fill="#999"/><rect x="110" y="2" width="1" height="1" fill="#999"/><rect x="114" y="2" width="1" height="1" fill="#999"/><rect x="118" y="2" width="1" height="1" fill="#999"/><rect x="122" y="2" width="1" height="1" fill="#999"/><rect x="126" y="2" width="1" height="1" fill="#999"/><rect x="130" y="2" width="1" height="1" fill="#999"/><rect x="134" y="2" width="1" height="1" fill="#999"/><rect x="138" y="2" width="1" height="1" fill="#999"/><rect x="142" y="2" width="1" height="1" fill="#999"/><rect x="146" y="2" width="1" height="1" fill="#999"/><rect x="150" y="2" width="1" height="1" fill="#999"/><rect x="154" y="2" width="1" height="1" fill="#999"/><rect x="158" y="2" width="1" height="1" fill="#999"/><rect x="162" y="2" width="1" height="1" fill="#999"/><rect x="166" y="2" width="1" height="1" fill="#999"/><rect x="170" y="2" width="1" height="1" fill="#999"/><rect x="174" y="2" width="1" height="1" fill="#999"/><rect x="178" y="2" width="1" height="1" fill="#999"/><rect x="182" y="2" width="1" height="1" fill="#999"/><rect x="186" y="2" width="1" height="1" fill="#999"/><rect x="190" y="2" width="1" height="1" fill="#999"/><rect x="194" y="2" width="1" height="1" fill="#999"/><rect x="198" y="2" width="1" height="1" fill="#999"/><rect x="202" y="2" width="1" height="1" fill="#999"/><rect x="206" y="2" width="1" height="1" fill="#999"/><rect x="210" y="2" width="1" height="1" fill="#999"/><rect x="214" y="2" width="1" height="1" fill="#999"/><rect x="218" y="2" width="1" height="1" fill="#999"/><rect x="222" y="2" width="1" height="1" fill="#999"/><rect x="226" y="2" width="1" height="1" fill="#999"/><rect x="230" y="2" width="1" height="1" fill="#999"/><rect x="234" y="2" width="1" height="1" fill="#999"/><rect x="238" y="2" width="1" height="1" fill="#999"/><rect x="242" y="2" width="1" height="1" fill="#999"/><rect x="246" y="2" width="1" height="1" fill="#999"/><rect x="250" y="2" width="1" height="1" fill="#999"/><rect x="254" y="2" width="1" height="1" fill="#999"/><rect x="0" y="4" width="1" height="1" fill="#999"/><rect x="4" y="4" width="1" height="1" fill="#999"/><rect x="8" y="4" width="1" height="1" fill="#999"/><rect x="12" y="4" width="1" height="1" fill="#999"/><rect x="16" y="4" width="1" height="1" fill="#999"/><rect x="20" y="4" width="1" height="1" fill="#999"/><rect x="24" y="4" width="1" height="1" fill="#999"/><rect x="28" y="4" width="1" height="1" fill="#999"/><rect x="32" y="4" width="1" height="1" fill="#999"/><rect x="36" y="4" width="1" height="1" fill="#999"/><rect x="40" y="4" width="1" height="1" fill="#999"/><rect x="44" y="4" width="1" height="1" fill="#999"/><rect x="48" y="4" width="1" height="1" fill="#999"/><rect x="52" y="4" width="1" height="1" fill="#999"/><rect x="56" y="4" width="1" height="1" fill="#999"/><rect x="60" y="4" width="1" height="1" fill="#999"/><rect x="64" y="4" width="1" height="1" fill="#999"/><rect x="68" y="4" width="1" height="1" fill="#999"/><rect x="72" y="4" width="1" height="1" fill="#999"/><rect x="76" y="4" width="1" height="1" fill="#999"/><rect x="80" y="4" width="1" height="1" fill="#999"/><rect x="84" y="4" width="1" height="1" fill="#999"/><rect x="88" y="4" width="1" height="1" fill="#999"/><rect x="92" y="4" width="1" height="1" fill="#999"/><rect x="96" y="4" width="1" height="1" fill="#999"/><rect x="100" y="4" width="1" height="1" fill="#999"/><rect x="104" y="4" width="1" height="1" fill="#999"/><rect x="108" y="4" width="1" height="1" fill="#999"/><rect x="112" y="4" width="1" height="1" fill="#999"/><rect x="116" y="4" width="1" height="1" fill="#999"/><rect x="120" y="4" width="1" height="1" fill="#999"/><rect x="124" y="4" width="1" height="1" fill="#999"/><rect x="128" y="4" width="1" height="1" fill="#999"/><rect x="132" y="4" width="1" height="1" fill="#999"/><rect x="136" y="4" width="1" height="1" fill="#999"/><rect x="140" y="4" width="1" height="1" fill="#999"/><rect x="144" y="4" width="1" height="1" fill="#999"/><rect x="148" y="4" width="1" height="1" fill="#999"/><rect x="152" y="4" width="1" height="1" fill="#999"/><rect x="156" y="4" width="1" height="1" fill="#999"/><rect x="160" y="4" width="1" height="1" fill="#999"/><rect x="164" y="4" width="1" height="1" fill="#999"/><rect x="168" y="4" width="1" height="1" fill="#999"/><rect x="172" y="4" width="1" height="1" fill="#999"/><rect x="176" y="4" width="1" height="1" fill="#999"/><rect x="180" y="4" width="1" height="1" fill="#999"/><rect x="184" y="4" width="1" height="1" fill="#999"/><rect x="188" y="4" width="1" height="1" fill="#999"/><rect x="192" y="4" width="1" height="1" fill="#999"/><rect x="196" y="4" width="1" height="1" fill="#999"/><rect x="200" y="4" width="1" height="1" fill="#999"/><rect x="204" y="4" width="1" height="1" fill="#999"/><rect x="208" y="4" width="1" height="1" fill="#999"/><rect x="212" y="4" width="1" height="1" fill="#999"/><rect x="216" y="4" width="1" height="1" fill="#999"/><rect x="220" y="4" width="1" height="1" fill="#999"/><rect x="224" y="4" width="1" height="1" fill="#999"/><rect x="228" y="4" width="1" height="1" fill="#999"/><rect x="232" y="4" width="1" height="1" fill="#999"/><rect x="236" y="4" width="1" height="1" fill="#999"/><rect x="240" y="4" width="1" height="1" fill="#999"/><rect x="244" y="4" width="1" height="1" fill="#999"/><rect x="248" y="4" width="1" height="1" fill="#999"/><rect x="252" y="4" width="1" height="1" fill="#999"/></svg>
<svg class="a" style="left:1286px;top:94px;" width="8" height="5" viewBox="0 0 8 5"><path d="M0 0 H8 L4 4.5 Z" fill="#1E1E1E"/></svg>
<svg class="a" style="left:1302px;top:90px" width="10" height="13" viewBox="1302 90 10 13"><path d="M1304.6 91.7 H1308.5 V97 H1304.6 Z" fill="none" stroke="#1E1E1E" stroke-width="1"/><rect x="1307" y="91.2" width="2" height="6" fill="#1E1E1E"/><path d="M1303 97.5 H1310" stroke="#1E1E1E" stroke-width="1.2"/><path d="M1306.5 98 V101.7" stroke="#1E1E1E" stroke-width="1"/></svg>
<svg class="a" style="left:1317px;top:91px" width="12" height="10" viewBox="1317 91 12 10"><path d="M1318.6 92.3 L1327.5 99.6 M1327.5 92.3 L1318.6 99.6" stroke="#1E1E1E" stroke-width="1.4"/></svg>
<svg class="a" style="left:931px;top:115px;" width="13" height="13" viewBox="0 0 13 13"><circle cx="6.5" cy="6.5" r="6" fill="#C6C6C6"/><path d="M3 6.5 L6 3.5 V5.3 H10 V7.7 H6 V9.5 Z" fill="#EEEEF2"/></svg>
<svg class="a" style="left:953px;top:115px;" width="13" height="13" viewBox="0 0 13 13"><circle cx="6.5" cy="6.5" r="6" fill="#C6C6C6"/><path d="M10 6.5 L7 3.5 V5.3 H3 V7.7 H7 V9.5 Z" fill="#EEEEF2"/></svg>
<svg class="a" style="left:974px;top:114px;" width="15" height="14" viewBox="0 0 15 14"><path d="M1 7 L7.5 1 L14 7 M3 6 V13.5 H12 V6" fill="none" stroke="#1E1E1E" stroke-width="1.3"/><rect x="6" y="9" width="3" height="4.5" fill="#1E1E1E"/></svg>
<div class="a" style="left:995px;top:113px;width:1px;height:18px;background:#CCCEDB;"></div>
<svg class="a" style="left:1005px;top:113px;" width="15" height="15" viewBox="0 0 15 15"><path d="M0 0.5 H4 M2 0.5 V4" stroke="#1E1E1E" stroke-width="1"/><circle cx="8.5" cy="9" r="5" fill="none" stroke="#1E1E1E" stroke-width="1.1"/><path d="M8.5 6 V9 H11" fill="none" stroke="#1E1E1E" stroke-width="1"/></svg>
<svg class="a" style="left:1026px;top:121px;" width="6" height="3" viewBox="0 0 6 3"><path d="M0 0 H6 L3 3 Z" fill="#717171"/></svg>
<svg class="a" style="left:1038px;top:113px" width="16" height="16" viewBox="1038 113 16 16"><path d="M1049.6 117.6 A4.6 4.6 0 1 0 1050.4 122.5" fill="none" stroke="#00539C" stroke-width="2.1"/><path d="M1046.6 114.6 L1052 115.2 L1051.2 120.6 Z" fill="#00539C"/></svg>
<svg class="a" style="left:1062px;top:114px" width="13" height="13" viewBox="1062 114 13 13"><path d="M1066 115.5 H1073.5 V121.5 M1065 117 H1072 V123" fill="none" stroke="#333" stroke-width="1"/><rect x="1063.5" y="118.5" width="7" height="7" fill="#EEEEF2" stroke="#333" stroke-width="1"/><path d="M1065 122 H1069" stroke="#00539C" stroke-width="1.2"/></svg>
<svg class="a" style="left:1082px;top:113px" width="16" height="16" viewBox="1082 113 16 16"><path d="M1086.5 124.5 H1083.5 V114.5 H1091 V117" fill="none" stroke="#333" stroke-width="1"/><path d="M1087.5 117.5 H1093.5 L1096.5 120.5 V127.5 H1087.5 Z" fill="#EEEEF2" stroke="#333" stroke-width="1"/><path d="M1089 121.5 H1095 M1089 123.5 H1095 M1089 125.5 H1095" stroke="#333" stroke-width="1"/></svg>
<div class="a" style="left:1104px;top:113px;width:1px;height:18px;background:#CCCEDB;"></div>
<svg class="a" style="left:1113px;top:116px" width="14" height="10" viewBox="1113 116 14 10"><path d="M1118 117.4 L1114.6 120.8 L1118 124.2 M1122 117.4 L1125.4 120.8 L1122 124.2" fill="none" stroke="#333" stroke-width="1.5"/></svg>
<svg class="a" style="left:1134px;top:114px" width="15" height="15" viewBox="1134 114 15 15"><path d="M1136.5 126.5 L1141.8 121.2" stroke="#333" stroke-width="2.8" stroke-linecap="round"/><circle cx="1144.3" cy="118.8" r="3.7" fill="#333"/><path d="M1144.6 118.5 L1147.8 115.3" stroke="#EEEEF2" stroke-width="2.2" stroke-linecap="round"/></svg>
<div class="a" style="left:1153px;top:109px;width:22px;height:24px;background:#EEEEF2;border:1px solid #3399FF;"></div>
<div class="a" style="left:1157px;top:122px;width:7px;height:1px;background:#333;"></div>
<div class="a" style="left:1163px;top:119px;width:8px;height:4px;background:#333;"></div>
<div class="a" style="left:922px;top:135px;width:412px;height:21px;background:#fff;border:1px solid #CCCEDB;border-left:none;border-right:none"></div>
<div class="a" style="left:927px;top:139.64px;font-size:12px;line-height:13.40px;color:#6D6D6D;letter-spacing:-0.18px;">Search Solution Explorer (Ctrl+;)</div>
<svg class="a" style="left:1306px;top:139px;" width="13" height="13" viewBox="0 0 13 13"><circle cx="8" cy="5" r="3.8" fill="none" stroke="#424242" stroke-width="1.6"/><path d="M5.5 7.5 L1 12" stroke="#424242" stroke-width="2.2" stroke-linecap="round"/></svg>
<svg class="a" style="left:1324px;top:144px;" width="6" height="3" viewBox="0 0 6 3"><path d="M0 0 H6 L3 3 Z" fill="#717171"/></svg>
<div class="a" style="left:922px;top:156px;width:412px;height:497px;background:#F5F5F5;"></div>
<svg class="a" style="left:1321px;top:166px;" width="9" height="5" viewBox="0 0 9 5"><path d="M4.5 0 L9 5 H0 Z" fill="#868999"/></svg>
<div class="a" style="left:1321px;top:557px;width:9px;height:79px;background:#C2C3C9;"></div>
<svg class="a" style="left:1321px;top:642px;" width="9" height="5" viewBox="0 0 9 5"><path d="M0 0 H9 L4.5 5 Z" fill="#868999"/></svg>
<div class="a" style="left:922px;top:376px;width:395px;height:19px;background:#CCCEDB;"></div>
<div class="a" style="left:991px;top:164.14px;font-size:12px;line-height:13.40px;letter-spacing:-0.02px;">DependencyInjection</div>
<div class="a" style="left:1009px;top:182.14px;font-size:12px;line-height:13.40px;letter-spacing:-0.06px;">Sitecore.Foundation.DependencyInjection</div>
<div class="a" style="left:1027px;top:200.14px;font-size:12px;line-height:13.40px;letter-spacing:-0.02px;">Properties</div>
<div class="a" style="left:1027px;top:218.14px;font-size:12px;line-height:13.40px;letter-spacing:-0.02px;">References</div>
<div class="a" style="left:1027px;top:236.14px;font-size:12px;line-height:13.40px;letter-spacing:-0.02px;">App_Config</div>
<div class="a" style="left:1045px;top:254.14px;font-size:12px;line-height:13.40px;letter-spacing:-0.02px;">Include</div>
<div class="a" style="left:1063px;top:272.14px;font-size:12px;line-height:13.40px;letter-spacing:-0.02px;">Foundation</div>
<div class="a" style="left:1081px;top:290.14px;font-size:12px;line-height:13.40px;letter-spacing:0.03px;">Foundation.DependencyInjection.config</div>
<div class="a" style="left:1027px;top:308.14px;font-size:12px;line-height:13.40px;letter-spacing:-0.02px;">Infrastructure</div>
<div class="a" style="left:1045px;top:326.14px;font-size:12px;line-height:13.40px;letter-spacing:-0.02px;">MvcControllerServicesConfigurator.cs</div>
<div class="a" style="left:1027px;top:344.14px;font-size:12px;line-height:13.40px;letter-spacing:-0.02px;">Lifetime.cs</div>
<div class="a" style="left:1027px;top:362.14px;font-size:12px;line-height:13.40px;letter-spacing:-0.02px;">packages.config</div>
<div class="a" style="left:1027px;top:380.14px;font-size:12px;line-height:13.40px;letter-spacing:-0.02px;">ServiceAttribute.cs</div>
<div class="a" style="left:1027px;top:398.14px;font-size:12px;line-height:13.40px;letter-spacing:-0.22px;">ServiceCollectionExtensions.cs</div>
<div class="a" style="left:1027px;top:416.14px;font-size:12px;line-height:13.40px;letter-spacing:-0.02px;">Web.config</div>
<div class="a" style="left:991px;top:434.14px;font-size:12px;line-height:13.40px;letter-spacing:-0.02px;">Dictionary</div>
<div class="a" style="left:991px;top:452.14px;font-size:12px;line-height:13.40px;letter-spacing:-0.02px;">FieldEditor</div>
<div class="a" style="left:991px;top:470.14px;font-size:12px;line-height:13.40px;letter-spacing:-0.02px;">Forms</div>
<div class="a" style="left:991px;top:488.14px;font-size:12px;line-height:13.40px;letter-spacing:-0.02px;">Indexing</div>
<div class="a" style="left:991px;top:506.14px;font-size:12px;line-height:13.40px;letter-spacing:-0.02px;">Installer</div>
<div class="a" style="left:991px;top:524.14px;font-size:12px;line-height:13.40px;letter-spacing:-0.3px;">LocalDatasource</div>
<div class="a" style="left:991px;top:542.14px;font-size:12px;line-height:13.40px;letter-spacing:0.3px;">Multisite</div>
<div class="a" style="left:991px;top:560.14px;font-size:12px;line-height:13.40px;letter-spacing:-0.35px;">Serialization</div>
<div class="a" style="left:991px;top:578.14px;font-size:12px;line-height:13.40px;letter-spacing:-0.3px;">SitecoreExtensions</div>
<div class="a" style="left:991px;top:596.14px;font-size:12px;line-height:13.40px;letter-spacing:-0.02px;">Testing</div>
<div class="a" style="left:991px;top:614.14px;font-size:12px;line-height:13.40px;letter-spacing:-0.02px;">Theming</div>
<div class="a" style="left:973px;top:632.14px;font-size:12px;line-height:13.40px;letter-spacing:-0.02px;">Project</div>
<svg class="a" style="left:921px;top:156px" width="413" height="497" viewBox="921 156 413 497"><path d="M956.5 166.8 V173.2 H950.2 Z" fill="#1E1E1E"/><path d="M972.0 165.5 L973.0 164.5 H976.5 L977.5 165.5 H984.0 V174.5 H972.0 Z" fill="#F0EFF1" stroke="#DCB67A" stroke-width="1"/><path d="M971.5 169.3 H977.0 L983.0 175 H971.5 Z" fill="#DCB67A"/><path d="M974.5 184.8 V191.2 H968.2 Z" fill="#1E1E1E"/><path d="M989 183 H1003" stroke="#333" stroke-width="2"/><path d="M1002.5 184 V193.3 H999.3" fill="none" stroke="#333" stroke-width="1.1"/><path d="M989.5 184 V186" stroke="#333" stroke-width="1"/><circle cx="993.6" cy="190.3" r="4.7" fill="#388A34"/><path d="M989.4 188.8 H997.8 M989.4 191.8 H997.8 M992.1 186 V194.6 M995.1 186 V194.6" stroke="#fff" stroke-width="0.9"/><path d="M987.5 201.6 L991.8 205.8 L987.5 210 Z" fill="none" stroke="#1E1E1E" stroke-width="1.1"/><path d="M1008.1 211.9 L1015.9 204.1" stroke="#424242" stroke-width="2.6" stroke-linecap="round"/><circle cx="1016.9" cy="203.1" r="3.4" fill="#424242"/><path d="M1017.1 202.9 L1019.9 200.1" stroke="#F5F5F5" stroke-width="2" stroke-linecap="round"/><path d="M987.5 219.6 L991.8 223.8 L987.5 228 Z" fill="none" stroke="#1E1E1E" stroke-width="1.1"/><rect x="1007.1" y="221.2" width="3.7" height="4.2" fill="#424242"/><rect x="1011.5" y="222.6" width="2" height="1" fill="#424242"/><rect x="1014.9" y="220.2" width="5.9" height="6.6" fill="#424242"/><path d="M992.5 238.8 V245.2 H986.2 Z" fill="#1E1E1E"/><path d="M1008.0 237.5 L1009.0 236.5 H1012.5 L1013.5 237.5 H1020.0 V246.5 H1008.0 Z" fill="#F0EFF1" stroke="#DCB67A" stroke-width="1"/><path d="M1007.5 241.3 H1013.0 L1019.0 247 H1007.5 Z" fill="#DCB67A"/><path d="M1010.5 256.8 V263.2 H1004.2 Z" fill="#1E1E1E"/><path d="M1026.0 255.5 L1027.0 254.5 H1030.5 L1031.5 255.5 H1038.0 V264.5 H1026.0 Z" fill="#F0EFF1" stroke="#DCB67A" stroke-width="1"/><path d="M1025.5 259.3 H1031.0 L1037.0 265 H1025.5 Z" fill="#DCB67A"/><path d="M1028.5 274.8 V281.2 H1022.2 Z" fill="#1E1E1E"/><path d="M1044.0 273.5 L1045.0 272.5 H1048.5 L1049.5 273.5 H1056.0 V282.5 H1044.0 Z" fill="#F0EFF1" stroke="#DCB67A" stroke-width="1"/><path d="M1043.5 277.3 H1049.0 L1055.0 283 H1043.5 Z" fill="#DCB67A"/><path d="M1065.5 294 V290 H1072 L1075 293 V300.6 H1066.5" fill="#F0EFF1" stroke="#333" stroke-width="1"/><path d="M1072 290 V293 H1075" fill="none" stroke="#333" stroke-width="0.9"/><path d="M1062 293.5 V296.3 Q1062 298 1064 298 Q1066 298 1066 296.3 V293.5" fill="none" stroke="#333" stroke-width="1.7"/><path d="M1064 297.5 V302.6" stroke="#333" stroke-width="2"/><path d="M992.5 310.8 V317.2 H986.2 Z" fill="#1E1E1E"/><path d="M1008.0 309.5 L1009.0 308.5 H1012.5 L1013.5 309.5 H1020.0 V318.5 H1008.0 Z" fill="#F0EFF1" stroke="#DCB67A" stroke-width="1"/><path d="M1007.5 313.3 H1013.0 L1019.0 319 H1007.5 Z" fill="#DCB67A"/><path d="M1005.5 327.6 L1009.8 331.8 L1005.5 336 Z" fill="none" stroke="#1E1E1E" stroke-width="1.1"/><path d="M1031.5 329.5 A2.55 2.55 0 1 0 1031.5 333.29999999999995" fill="none" stroke="#388A34" stroke-width="1.9"/><path d="M1033.9 327.6 V333.1 M1036.3 327.6 V333.1 M1032.9 329.3 H1038.1 M1032.9 331.6 H1038.1" stroke="#388A34" stroke-width="1.3"/><path d="M987.5 345.6 L991.8 349.8 L987.5 354 Z" fill="none" stroke="#1E1E1E" stroke-width="1.1"/><path d="M1013.5 347.5 A2.55 2.55 0 1 0 1013.5 351.29999999999995" fill="none" stroke="#388A34" stroke-width="1.9"/><path d="M1015.9 345.6 V351.1 M1018.3 345.6 V351.1 M1014.9 347.3 H1020.1 M1014.9 349.6 H1020.1" stroke="#388A34" stroke-width="1.3"/><path d="M1011.5 366 V362 H1018 L1021 365 V372.6 H1012.5" fill="#F0EFF1" stroke="#333" stroke-width="1"/><path d="M1018 362 V365 H1021" fill="none" stroke="#333" stroke-width="0.9"/><path d="M1008 365.5 V368.3 Q1008 370 1010 370 Q1012 370 1012 368.3 V365.5" fill="none" stroke="#333" stroke-width="1.7"/><path d="M1010 369.5 V374.6" stroke="#333" stroke-width="2"/><path d="M987.5 381.6 L991.8 385.8 L987.5 390 Z" fill="none" stroke="#1E1E1E" stroke-width="1.1"/><path d="M1013.5 383.5 A2.55 2.55 0 1 0 1013.5 387.29999999999995" fill="none" stroke="#388A34" stroke-width="1.9"/><path d="M1015.9 381.6 V387.1 M1018.3 381.6 V387.1 M1014.9 383.3 H1020.1 M1014.9 385.6 H1020.1" stroke="#388A34" stroke-width="1.3"/><path d="M987.5 399.6 L991.8 403.8 L987.5 408 Z" fill="none" stroke="#1E1E1E" stroke-width="1.1"/><path d="M1013.5 401.5 A2.55 2.55 0 1 0 1013.5 405.29999999999995" fill="none" stroke="#388A34" stroke-width="1.9"/><path d="M1015.9 399.6 V405.1 M1018.3 399.6 V405.1 M1014.9 401.3 H1020.1 M1014.9 403.6 H1020.1" stroke="#388A34" stroke-width="1.3"/><path d="M987.5 417.6 L991.8 421.8 L987.5 426 Z" fill="none" stroke="#1E1E1E" stroke-width="1.1"/><path d="M1011.5 420 V416 H1018 L1021 419 V426.6 H1012.5" fill="#F0EFF1" stroke="#333" stroke-width="1"/><path d="M1018 416 V419 H1021" fill="none" stroke="#333" stroke-width="0.9"/><path d="M1008 419.5 V422.3 Q1008 424 1010 424 Q1012 424 1012 422.3 V419.5" fill="none" stroke="#333" stroke-width="1.7"/><path d="M1010 423.5 V428.6" stroke="#333" stroke-width="2"/><path d="M951.5 435.6 L955.8 439.8 L951.5 444 Z" fill="none" stroke="#1E1E1E" stroke-width="1.1"/><path d="M971.5 435 L972.5 434 H976.5 L977.5 435 H984.5 V445 H971.5 Z" fill="#DCB67A"/><path d="M978.0 436 H983.5" stroke="#F0E2C8" stroke-width="1"/><path d="M951.5 453.6 L955.8 457.8 L951.5 462 Z" fill="none" stroke="#1E1E1E" stroke-width="1.1"/><path d="M971.5 453 L972.5 452 H976.5 L977.5 453 H984.5 V463 H971.5 Z" fill="#DCB67A"/><path d="M978.0 454 H983.5" stroke="#F0E2C8" stroke-width="1"/><path d="M951.5 471.6 L955.8 475.8 L951.5 480 Z" fill="none" stroke="#1E1E1E" stroke-width="1.1"/><path d="M971.5 471 L972.5 470 H976.5 L977.5 471 H984.5 V481 H971.5 Z" fill="#DCB67A"/><path d="M978.0 472 H983.5" stroke="#F0E2C8" stroke-width="1"/><path d="M951.5 489.6 L955.8 493.8 L951.5 498 Z" fill="none" stroke="#1E1E1E" stroke-width="1.1"/><path d="M971.5 489 L972.5 488 H976.5 L977.5 489 H984.5 V499 H971.5 Z" fill="#DCB67A"/><path d="M978.0 490 H983.5" stroke="#F0E2C8" stroke-width="1"/><path d="M951.5 507.6 L955.8 511.8 L951.5 516 Z" fill="none" stroke="#1E1E1E" stroke-width="1.1"/><path d="M971.5 507 L972.5 506 H976.5 L977.5 507 H984.5 V517 H971.5 Z" fill="#DCB67A"/><path d="M978.0 508 H983.5" stroke="#F0E2C8" stroke-width="1"/><path d="M951.5 525.6 L955.8 529.8 L951.5 534 Z" fill="none" stroke="#1E1E1E" stroke-width="1.1"/><path d="M971.5 525 L972.5 524 H976.5 L977.5 525 H984.5 V535 H971.5 Z" fill="#DCB67A"/><path d="M978.0 526 H983.5" stroke="#F0E2C8" stroke-width="1"/><path d="M951.5 543.6 L955.8 547.8 L951.5 552 Z" fill="none" stroke="#1E1E1E" stroke-width="1.1"/><path d="M971.5 543 L972.5 542 H976.5 L977.5 543 H984.5 V553 H971.5 Z" fill="#DCB67A"/><path d="M978.0 544 H983.5" stroke="#F0E2C8" stroke-width="1"/><path d="M951.5 561.6 L955.8 565.8 L951.5 570 Z" fill="none" stroke="#1E1E1E" stroke-width="1.1"/><path d="M971.5 561 L972.5 560 H976.5 L977.5 561 H984.5 V571 H971.5 Z" fill="#DCB67A"/><path d="M978.0 562 H983.5" stroke="#F0E2C8" stroke-width="1"/><path d="M951.5 579.6 L955.8 583.8 L951.5 588 Z" fill="none" stroke="#1E1E1E" stroke-width="1.1"/><path d="M971.5 579 L972.5 578 H976.5 L977.5 579 H984.5 V589 H971.5 Z" fill="#DCB67A"/><path d="M978.0 580 H983.5" stroke="#F0E2C8" stroke-width="1"/><path d="M951.5 597.6 L955.8 601.8 L951.5 606 Z" fill="none" stroke="#1E1E1E" stroke-width="1.1"/><path d="M971.5 597 L972.5 596 H976.5 L977.5 597 H984.5 V607 H971.5 Z" fill="#DCB67A"/><path d="M978.0 598 H983.5" stroke="#F0E2C8" stroke-width="1"/><path d="M951.5 615.6 L955.8 619.8 L951.5 624 Z" fill="none" stroke="#1E1E1E" stroke-width="1.1"/><path d="M971.5 615 L972.5 614 H976.5 L977.5 615 H984.5 V625 H971.5 Z" fill="#DCB67A"/><path d="M978.0 616 H983.5" stroke="#F0E2C8" stroke-width="1"/><path d="M933.5 633.6 L937.8 637.8 L933.5 642 Z" fill="none" stroke="#1E1E1E" stroke-width="1.1"/><path d="M953.5 633 L954.5 632 H958.5 L959.5 633 H966.5 V643 H953.5 Z" fill="#DCB67A"/><path d="M960.0 634 H965.5" stroke="#F0E2C8" stroke-width="1"/></svg>
<div class="a" style="left:921px;top:653px;width:101px;height:21px;background:#F5F5F5;border:1px solid #CCCEDB;border-top:none"></div>
<div class="a" style="left:927.5px;top:657.14px;font-size:12px;line-height:13.40px;color:#0E70C0;letter-spacing:-0.15px;">Solution Explorer</div>
<div class="a" style="left:1027.5px;top:657.14px;font-size:12px;line-height:13.40px;letter-spacing:-0.25px;">Team Explorer</div>
<div class="a" style="left:1112.5px;top:657.14px;font-size:12px;line-height:13.40px;letter-spacing:-0.42px;">Class View</div>
<div class="a" style="left:0px;top:705px;width:1366px;height:23px;background:#007ACC;"></div>
<div class="a" style="left:4px;top:711.14px;font-size:12px;line-height:13.40px;color:#fff;letter-spacing:-0.2px;">Ready</div>
<div class="a" style="left:606px;top:711.14px;font-size:12px;line-height:13.40px;color:#fff;letter-spacing:-0.35px;">Ln 18</div>
<div class="a" style="left:698px;top:711.14px;font-size:12px;line-height:13.40px;color:#fff;letter-spacing:-0.3px;">Col 44</div>
<div class="a" style="left:790px;top:711.14px;font-size:12px;line-height:13.40px;color:#fff;letter-spacing:-0.35px;">Ch 44</div>
<div class="a" style="left:926px;top:711.14px;font-size:12px;line-height:13.40px;color:#fff;letter-spacing:-0.5px;">INS</div>
<svg class="a" style="left:1279px;top:711px" width="11" height="13" viewBox="1279 711 11 13"><path d="M1284.3 714 V722.7" stroke="#E8DCC8" stroke-width="2"/><path d="M1280 717.3 L1284.3 712.5 L1288.6 717.3 L1287.2 718.3 L1284.3 715.2 L1281.4 718.3 Z" fill="#E8DCC8"/></svg>
<div class="a" style="left:1298px;top:711.14px;font-size:12px;line-height:13.40px;color:#fff;letter-spacing:-0.2px;">Publish</div>
<svg class="a" style="left:1343px;top:715px;" width="8" height="5" viewBox="0 0 8 5"><path d="M4 0 L8 4.5 H0 Z" fill="#fff"/></svg>
<div class="a" style="left:0px;top:728px;width:1366px;height:8px;background:#6BC9E9;"></div>
<div class="a" style="left:0px;top:728px;width:1366px;height:1px;background:#2F6E8C;"></div>
<div class="a" style="left:0px;top:728px;width:1px;height:8px;background:#2F6E8C;"></div>
<div class="a" style="left:237px;top:729px;width:52px;height:7px;background:#86D3EF;border:1px solid #35708C;border-bottom:none"></div>
<div class="a" style="left:299px;top:729px;width:60px;height:7px;background:#86D3EF;border:1px solid #35708C;border-bottom:none"></div>
<div class="a" style="left:361px;top:729px;width:60px;height:7px;background:#86D3EF;border:1px solid #35708C;border-bottom:none"></div>
<div class="a" style="left:423px;top:729px;width:59px;height:7px;background:#86D3EF;border:1px solid #35708C;border-bottom:none"></div>
<div class="a" style="left:485px;top:729px;width:52px;height:7px;background:#86D3EF;border:1px solid #35708C;border-bottom:none"></div>
<div class="a" style="left:547px;top:729px;width:60px;height:7px;background:#86D3EF;border:1px solid #35708C;border-bottom:none"></div>
<div class="a" style="left:609px;top:729px;width:59px;height:7px;background:#86D3EF;border:1px solid #35708C;border-bottom:none"></div>
<div class="a" style="left:671px;top:729px;width:59px;height:7px;background:#86D3EF;border:1px solid #35708C;border-bottom:none"></div>
<div class="a" style="left:292px;top:729px;width:1px;height:7px;background:#35708C;"></div>
<div class="a" style="left:296px;top:729px;width:1px;height:7px;background:#35708C;"></div>
<div class="a" style="left:540px;top:729px;width:1px;height:7px;background:#35708C;"></div>
<div class="a" style="left:544px;top:729px;width:1px;height:7px;background:#35708C;"></div>
<div class="a" style="left:21px;top:732px;width:17px;height:4px;background:#E4E8EE;border-radius:6px 3px 0 0"></div>
<div class="a" style="left:65px;top:730px;width:16px;height:6px;background:#1F86D6;border:1px solid #fff;border-bottom:none"></div>
<div class="a" style="left:192px;top:732px;width:24px;height:4px;background:#D9DDE6;border-radius:8px 4px 0 0"></div>
<div class="a" style="left:255px;top:733px;width:10px;height:3px;background:#D7A53C;"></div>
<div class="a" style="left:318px;top:732px;width:14px;height:4px;background:#D64339;border-radius:7px 7px 0 0"></div>
<div class="a" style="left:384px;top:731px;width:12px;height:5px;background:#D2D6DE;border-radius:4px 4px 0 0"></div>
<div class="a" style="left:438px;top:733px;width:28px;height:3px;background:#6A6A6A;"></div>
<div class="a" style="left:515px;top:732px;width:10px;height:4px;background:#68217A;border-radius:3px 3px 0 0"></div>
<div class="a" style="left:572px;top:733px;width:15px;height:3px;background:#9A9A9A;"></div>
<div class="a" style="left:623px;top:732px;width:20px;height:4px;background:#E3A52A;border-radius:6px 6px 0 0"></div>
<div class="a" style="left:686px;top:733px;width:28px;height:3px;background:#6A6A6A;"></div>
<div class="a" style="left:1365px;top:728px;width:1px;height:8px;background:#2F4F5F;"></div>
<div class="a" style="left:1300px;top:733.14px;font-size:12px;line-height:13.40px;color:#000;letter-spacing:0.3px;">11:04 AM</div>
</body></html>
